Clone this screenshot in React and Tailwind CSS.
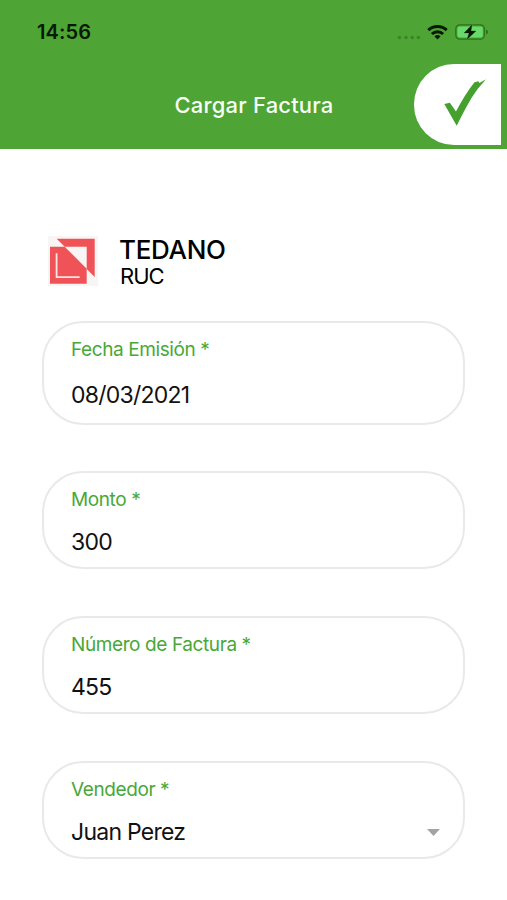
import React, { useState } from 'react';
import clsx from 'clsx';

const StatusBar = () => (
  <div className="flex h-16 items-start justify-between pt-5 pr-[18px] pl-[37px]">
    <span className="text-[20px] leading-6 font-semibold tracking-[0.1px] text-[#071903]">14:56</span>
    <div className="flex h-6 items-center">
      {/* Signal */}
      <svg className="mt-2.5 mr-[6px] h-[5px] w-[25px]" viewBox="0 0 25 5" fill="#3b8527">
        <circle cx="3.5" cy="2.5" r="1.7" />
        <circle cx="10" cy="2.5" r="1.7" />
        <circle cx="16.2" cy="2.5" r="1.7" />
        <circle cx="22.4" cy="2.5" r="1.7" />
      </svg>
      {/* Wifi */}
      <svg className="mr-[7px] h-4 w-[21px]" viewBox="0 0 21 16" fill="none" stroke="#071903" strokeWidth="3">
        <path d="M1.3 6.2a13.3 13.3 0 0 1 18.4 0" />
        <path d="M4.9 10a8.2 8.2 0 0 1 11.2 0" />
        <path d="M10.5 15.6l-3-3.1a4.3 4.3 0 0 1 6 0z" fill="#071903" stroke="none" />
      </svg>
      {/* Battery */}
      <svg className="h-[18px] w-[34px]" viewBox="0 0 34 18">
        <rect x="0.8" y="1.8" width="28.6" height="14.4" rx="4" fill="none" stroke="#2c701c" strokeWidth="1.2" />
        <rect x="2.4" y="3.4" width="25.4" height="11.2" rx="2.4" fill="#68d96b" />
        <path d="M31 6.5v5c1.2-.4 2-1.3 2-2.5s-.8-2.1-2-2.5z" fill="#2c701c" />
        <path d="M17 1.8L9 10h5l-2 6.4L21 8h-5z" fill="#071903" stroke="#4ea434" strokeWidth="0.8" paintOrder="stroke" />
      </svg>
    </div>
  </div>
);

const Header = () => (
  <header className="h-[149px] bg-[#4ea434]">
    <StatusBar />
    <div className="grid grid-cols-[174.5px_1fr_87px] items-center pr-[6px]">
      <h1 className="col-start-2 text-[22px] leading-7 font-medium tracking-[0.18px] whitespace-nowrap text-[#f7fff4]">
        Cargar Factura
      </h1>
      <button type="button" aria-label="Guardar" className="h-[81px] w-[87px] rounded-l-[40px] bg-white">
        <svg className="h-[81px] w-[87px]" viewBox="0 0 87 81" fill="#45a02e">
          <path d="M30.3 40l5.6-1.3L42 47.6C47.5 37 53.5 27 60.5 18.3l4-1 .8 1.7 6.7-3.8-8.4 9.8C55.5 36 49 49 42.7 61.7z" />
        </svg>
      </button>
    </div>
  </header>
);

const Logo = () => (
  <svg className="h-[50px] w-[50px]" viewBox="0 0 50 50">
    <rect width="50" height="50" fill="#f8f6f5" />
    <path d="M8.7 2.7h38v38.3L38.7 33V10.7H16.7z" fill="#ef5357" />
    <path d="M2 10.7h14.7l22 22v15H2z" fill="#ef5357" />
    <path d="M8.6 17.3v23.9h23" fill="none" stroke="#fbe4e2" strokeWidth="1.8" />
  </svg>
);

const Field = ({ label, tall, select, value, onChange }) => (
  <label
    className={clsx(
      'block rounded-[41px] border-2 border-[#e9e9e9] pt-[15px] pr-[23px] pl-[27px]',
      tall ? '-mb-px h-[104px]' : 'h-[98px]'
    )}
  >
    <span className="block text-[19px] leading-6 tracking-[-0.4px] text-[#48a837]">{label} *</span>
    <span className={clsx('flex items-center', tall ? 'mt-[19px]' : 'mt-4')}>
      <input
        className="h-7 w-full min-w-0 bg-transparent text-[23px] leading-7 tracking-[-0.75px] text-[#111111] outline-none"
        value={value}
        readOnly={select}
        onChange={(e) => onChange(e.target.value)}
      />
      {select && (
        <svg className="h-[7px] w-[13px] shrink-0" viewBox="0 0 13 7" fill="#a3a3a3">
          <path d="M0 0h13L6.5 7z" />
        </svg>
      )}
    </span>
  </label>
);

const App = () => {
  const [invoice, setInvoice] = useState({
    date: '08/03/2021',
    amount: '300',
    number: '455',
    seller: 'Juan Perez',
  });

  const update = (key) => (value) => setInvoice({ ...invoice, [key]: value });

  return (
    <div className="h-[900px] w-full overflow-hidden bg-white font-['Inter',sans-serif]">
      <Header />

      <main className="px-[42px] pt-[87px]">
        {/* Company */}
        <div className="flex items-start pl-[6px]">
          <Logo />
          <div className="ml-[21px] text-black">
            <p className="text-[26px] leading-7 font-[450] tracking-[-0.3px]">TEDANO</p>
            <p className="pl-px text-[22px] leading-[25px] tracking-[-1px]">RUC</p>
          </div>
        </div>

        {/* Invoice form */}
        <form className="mt-8 flex flex-col gap-[47px]">
          <Field label="Fecha Emisión" tall value={invoice.date} onChange={update('date')} />
          <Field label="Monto" value={invoice.amount} onChange={update('amount')} />
          <Field label="Número de Factura" value={invoice.number} onChange={update('number')} />
          <Field label="Vendedor" select value={invoice.seller} onChange={update('seller')} />
        </form>
      </main>
    </div>
  );
};

export default App;
